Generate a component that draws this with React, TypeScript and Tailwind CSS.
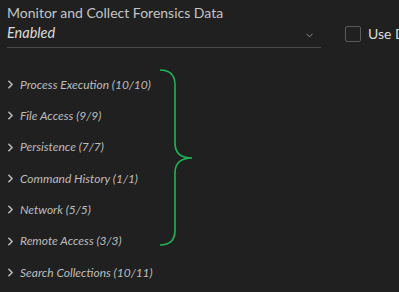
import { ChevronDown, ChevronRight } from "lucide-react";

const categories = [
  "Process Execution (10/10)",
  "File Access (9/9)",
  "Persistence (7/7)",
  "Command History (1/1)",
  "Network (5/5)",
  "Remote Access (3/3)",
  "Search Collections (10/11)",
];

export default function App() {
  return (
    <main
      className="relative h-[292px] w-[399px] overflow-hidden bg-[#202020]"
      style={{ fontFamily: "Lato, 'Noto Sans', sans-serif" }}
    >
      {/* Setting row */}
      <div className="flex items-end pl-[7px] pt-[4px]">
        <div className="flex w-[314px] shrink-0 flex-col">
          <span className="text-[14px] leading-[18px] text-[#c4c4c4]">
            Monitor and Collect Forensics Data
          </span>
          <div className="mt-[1px] flex h-[25px] items-center justify-between border-b border-[#4a4a4a] pb-[4px]">
            <span className="text-[14.5px] italic text-[#dcdcdc]">Enabled</span>
            <ChevronDown size={11} strokeWidth={2} className="mr-[6px] mt-[4px] text-[#9a9a9a]" />
          </div>
        </div>

        <div className="mb-[4px] ml-[24px] flex shrink-0 items-center gap-[7px]">
          <div className="h-[16px] w-[16px] shrink-0 rounded-[2px] border border-[#5a5a5a]" />
          <span className="whitespace-nowrap text-[14px] text-[#dcdcdc]">Use Default Settings</span>
        </div>
      </div>

      {/* Collection categories */}
      <ul className="mt-[21px] flex flex-col">
        {categories.map((c) => (
          <li key={c} className="flex h-[31.33px] items-center gap-[3px] pl-[4px]">
            <ChevronRight size={13} strokeWidth={3} className="text-[#b8b8b8]" />
            <span className="text-[12px] italic text-[#bdbdbd]">{c}</span>
          </li>
        ))}
      </ul>

      {/* Brace annotation */}
      <svg
        className="pointer-events-none absolute left-[155px] top-[65px]"
        width="45"
        height="185"
        viewBox="0 0 45 185"
        fill="none"
      >
        <path
          d="M5 5 C15 5 20 10 20 20 L20 78 C20 88 26 93 37 93 C26 93 20 98 20 108 L20 165 C20 175 15 180 5 180"
          stroke="#1fb556"
          strokeWidth="1.6"
        />
      </svg>
    </main>
  );
}
